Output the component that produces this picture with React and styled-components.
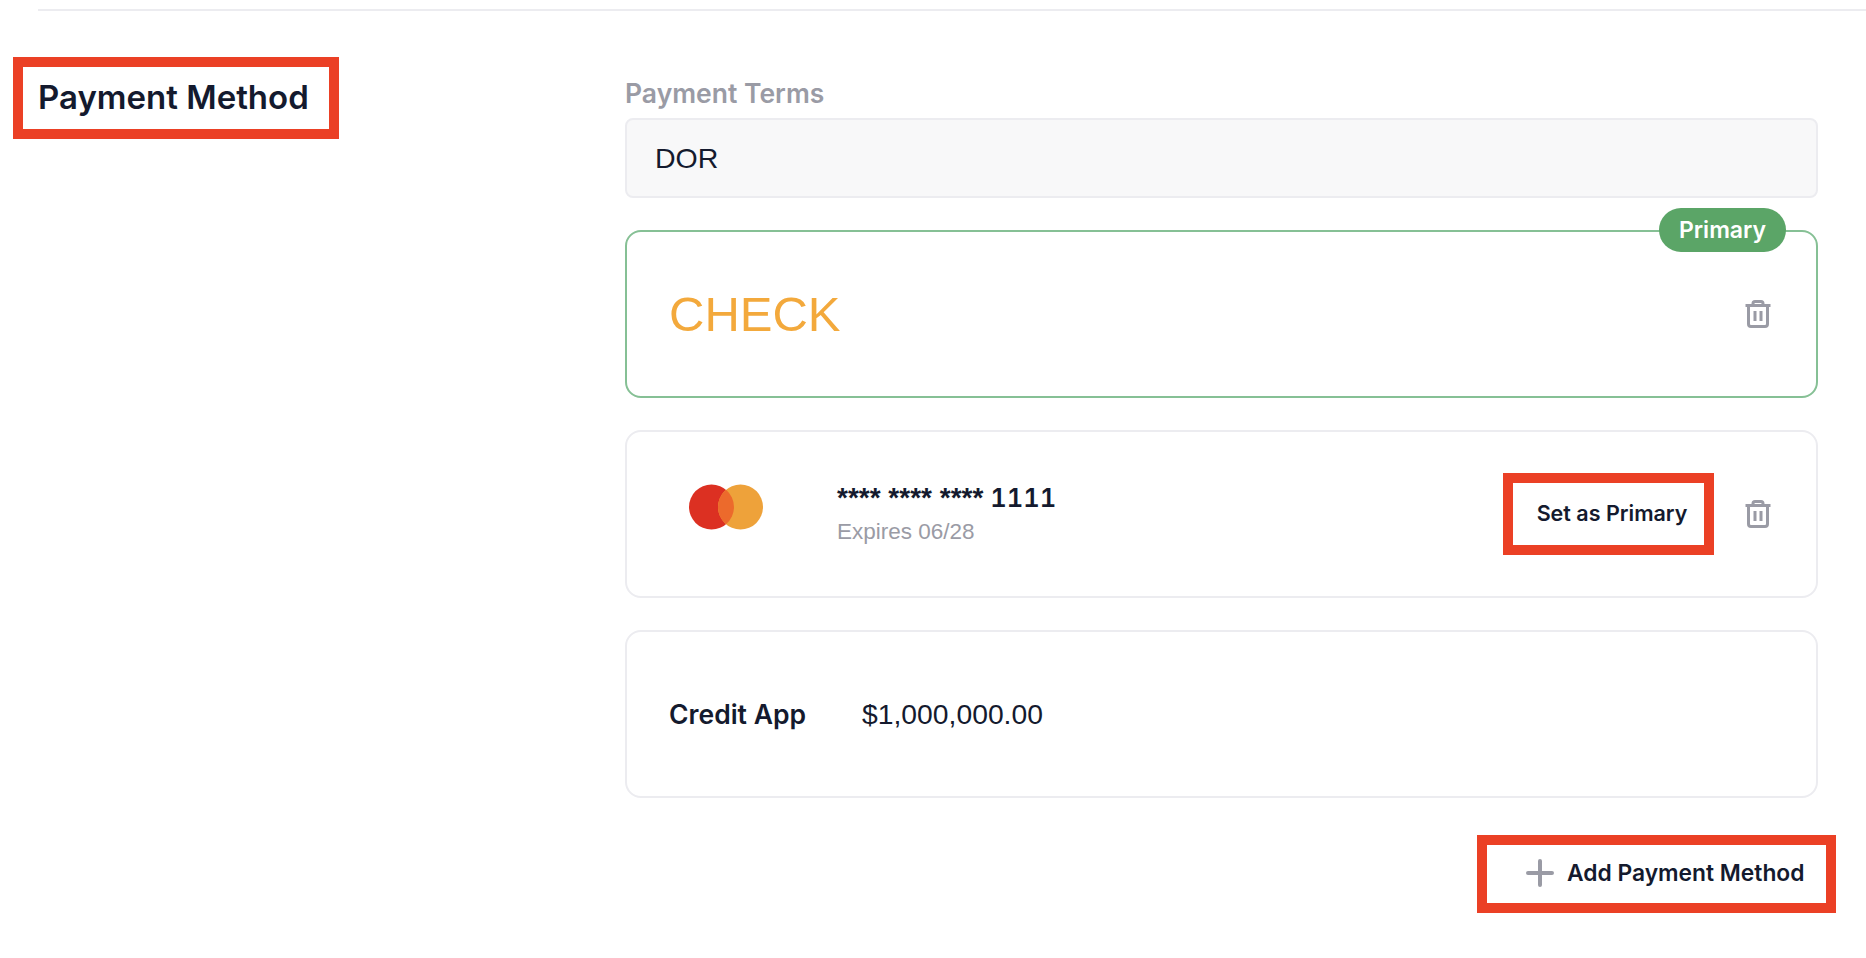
import React from 'react';
import styled, { createGlobalStyle } from 'styled-components';

const ink = '#141a2e';
const muted = '#9a9ba5';
const line = '#ececf0';
const annotation = '#eb4025';
const plainFont = '"Liberation Sans", Arial, sans-serif';

const GlobalStyle = createGlobalStyle`
  html, body {
    margin: 0;
    background: #fff;
    color: ${ink};
    font-family: Inter, "Liberation Sans", sans-serif;
  }
`;

const Page = styled.div`
  width: 1866px;
  height: 958px;
  overflow: hidden;
  padding: 9px 0 0 38px;
  box-sizing: border-box;
`;

const Rule = styled.div`
  height: 2px;
  background: ${line};
`;

const Section = styled.section`
  display: flex;
  align-items: flex-start;
  padding: 56px 48px 0 0;
`;

const TitleColumn = styled.div`
  width: 587px;
  flex: none;
`;

const Title = styled.h2`
  display: inline-block;
  margin: 0 0 0 -15px;
  padding: 0 20px 2px 15px;
  font-size: 33px;
  line-height: 60px;
  font-weight: 600;
  outline: 10px solid ${annotation};
`;

const Column = styled.div`
  flex: 1;
  display: flex;
  flex-direction: column;
  padding-top: 11px;
`;

const Label = styled.label`
  color: ${muted};
  font-size: 26.5px;
  font-weight: 600;
  line-height: 30px;
`;

const TermsValue = styled.div`
  margin-top: 10px;
  height: 80px;
  box-sizing: border-box;
  display: flex;
  align-items: center;
  padding: 0 28px;
  background: #f8f8f9;
  border: 2px solid ${line};
  border-radius: 8px;
  font-family: ${plainFont};
  font-size: 28.5px;
`;

const Card = styled.div`
  position: relative;
  height: 168px;
  box-sizing: border-box;
  display: flex;
  align-items: center;
  padding: 0 45px 0 42px;
  margin-top: ${p => p.$top}px;
  border: 2px solid ${p => (p.$primary ? '#86c095' : line)};
  border-radius: 16px;
`;

const Badge = styled.span`
  position: absolute;
  top: -24px;
  right: 30px;
  width: 127px;
  height: 44px;
  display: flex;
  align-items: center;
  justify-content: center;
  border-radius: 22px;
  background: #5ba567;
  color: #fff;
  font-size: 23px;
  font-weight: 600;
`;

const MethodName = styled.span`
  flex: 1;
  color: #f3a93c;
  font-family: ${plainFont};
  font-size: 49px;
`;

const Brand = styled.svg`
  width: 74px;
  height: 46px;
  margin: 0 0 14px 20px;
  flex: none;
`;

const CardText = styled.div`
  flex: 1;
  margin: 1px 0 0 74px;
`;

const CardNumber = styled.div`
  display: flex;
  align-items: baseline;
  gap: 7px;
  font-family: ${plainFont};
  font-size: 28px;
  font-weight: 700;
  line-height: 34px;
`;

const LastDigits = styled.span`
  font-family: Inter, sans-serif;
  font-size: 25.5px;
  font-weight: 600;
  font-variant-numeric: tabular-nums;
`;

const Expiry = styled.div`
  color: ${muted};
  font-family: ${plainFont};
  font-size: 22.5px;
  line-height: 34px;
`;

const SetPrimary = styled.button`
  width: 191px;
  height: 62px;
  margin-right: 41px;
  padding: 0 0 2px 7px;
  border: 0;
  background: #fff;
  outline: 10px solid ${annotation};
  color: ${ink};
  font-family: inherit;
  font-size: 21.5px;
  font-weight: 600;
`;

const TrashIcon = styled.svg`
  width: 26px;
  height: 28px;
  flex: none;
  fill: none;
  stroke: ${muted};
  stroke-width: 3;
`;

const CreditLabel = styled.span`
  font-size: 26.5px;
  font-weight: 600;
`;

const CreditValue = styled.span`
  margin-left: 56px;
  font-family: ${plainFont};
  font-size: 28.3px;
`;

const Footer = styled.div`
  display: flex;
  justify-content: flex-end;
  margin: 47px -8px 0 0;
`;

const AddButton = styled.button`
  width: 339px;
  height: 58px;
  display: flex;
  align-items: center;
  padding: 0 0 3px 39px;
  gap: 13px;
  border: 0;
  background: #fff;
  outline: 10px solid ${annotation};
  color: ${ink};
  font-family: inherit;
  font-size: 22.8px;
  font-weight: 600;
`;

const PlusIcon = styled.svg`
  width: 28px;
  height: 28px;
  flex: none;
  stroke: ${muted};
  stroke-width: 4;
  stroke-linecap: round;
`;

const Trash = () => (
  <TrashIcon viewBox="0 0 26 28">
    <path d="M0.5 5.5h25" />
    <path d="M8 5.5V3.5Q8 1.5 10 1.5h6Q18 1.5 18 3.5v2" />
    <path d="M3.5 5.5V24Q3.5 26.5 6 26.5h14Q22.5 26.5 22.5 24V5.5" />
    <path d="M10 11v10M16 11v10" />
  </TrashIcon>
);

const App = () => (
  <Page>
    <GlobalStyle />
    <Rule />
    <Section>
      <TitleColumn>
        <Title>Payment Method</Title>
      </TitleColumn>
      <Column>
        <Label>Payment Terms</Label>
        <TermsValue>DOR</TermsValue>
        <Card $primary $top={32}>
          <Badge>Primary</Badge>
          <MethodName>CHECK</MethodName>
          <Trash />
        </Card>
        <Card $top={32}>
          <Brand viewBox="0 0 74 46">
            <circle cx="22.5" cy="23" r="22.5" fill="#dc3022" />
            <circle cx="51.5" cy="23" r="22.5" fill="#eea23a" />
            <path d="M37 5.8a22.5 22.5 0 0 1 0 34.4a22.5 22.5 0 0 1 0-34.4z" fill="#ec6a2c" />
          </Brand>
          <CardText>
            <CardNumber>
              <span>**** **** ****</span>
              <LastDigits>1111</LastDigits>
            </CardNumber>
            <Expiry>Expires 06/28</Expiry>
          </CardText>
          <SetPrimary>Set as Primary</SetPrimary>
          <Trash />
        </Card>
        <Card $top={32}>
          <CreditLabel>Credit App</CreditLabel>
          <CreditValue>$1,000,000.00</CreditValue>
        </Card>
        <Footer>
          <AddButton>
            <PlusIcon viewBox="0 0 28 28">
              <path d="M14 2v24M2 14h24" />
            </PlusIcon>
            Add Payment Method
          </AddButton>
        </Footer>
      </Column>
    </Section>
  </Page>
);

export default App;
